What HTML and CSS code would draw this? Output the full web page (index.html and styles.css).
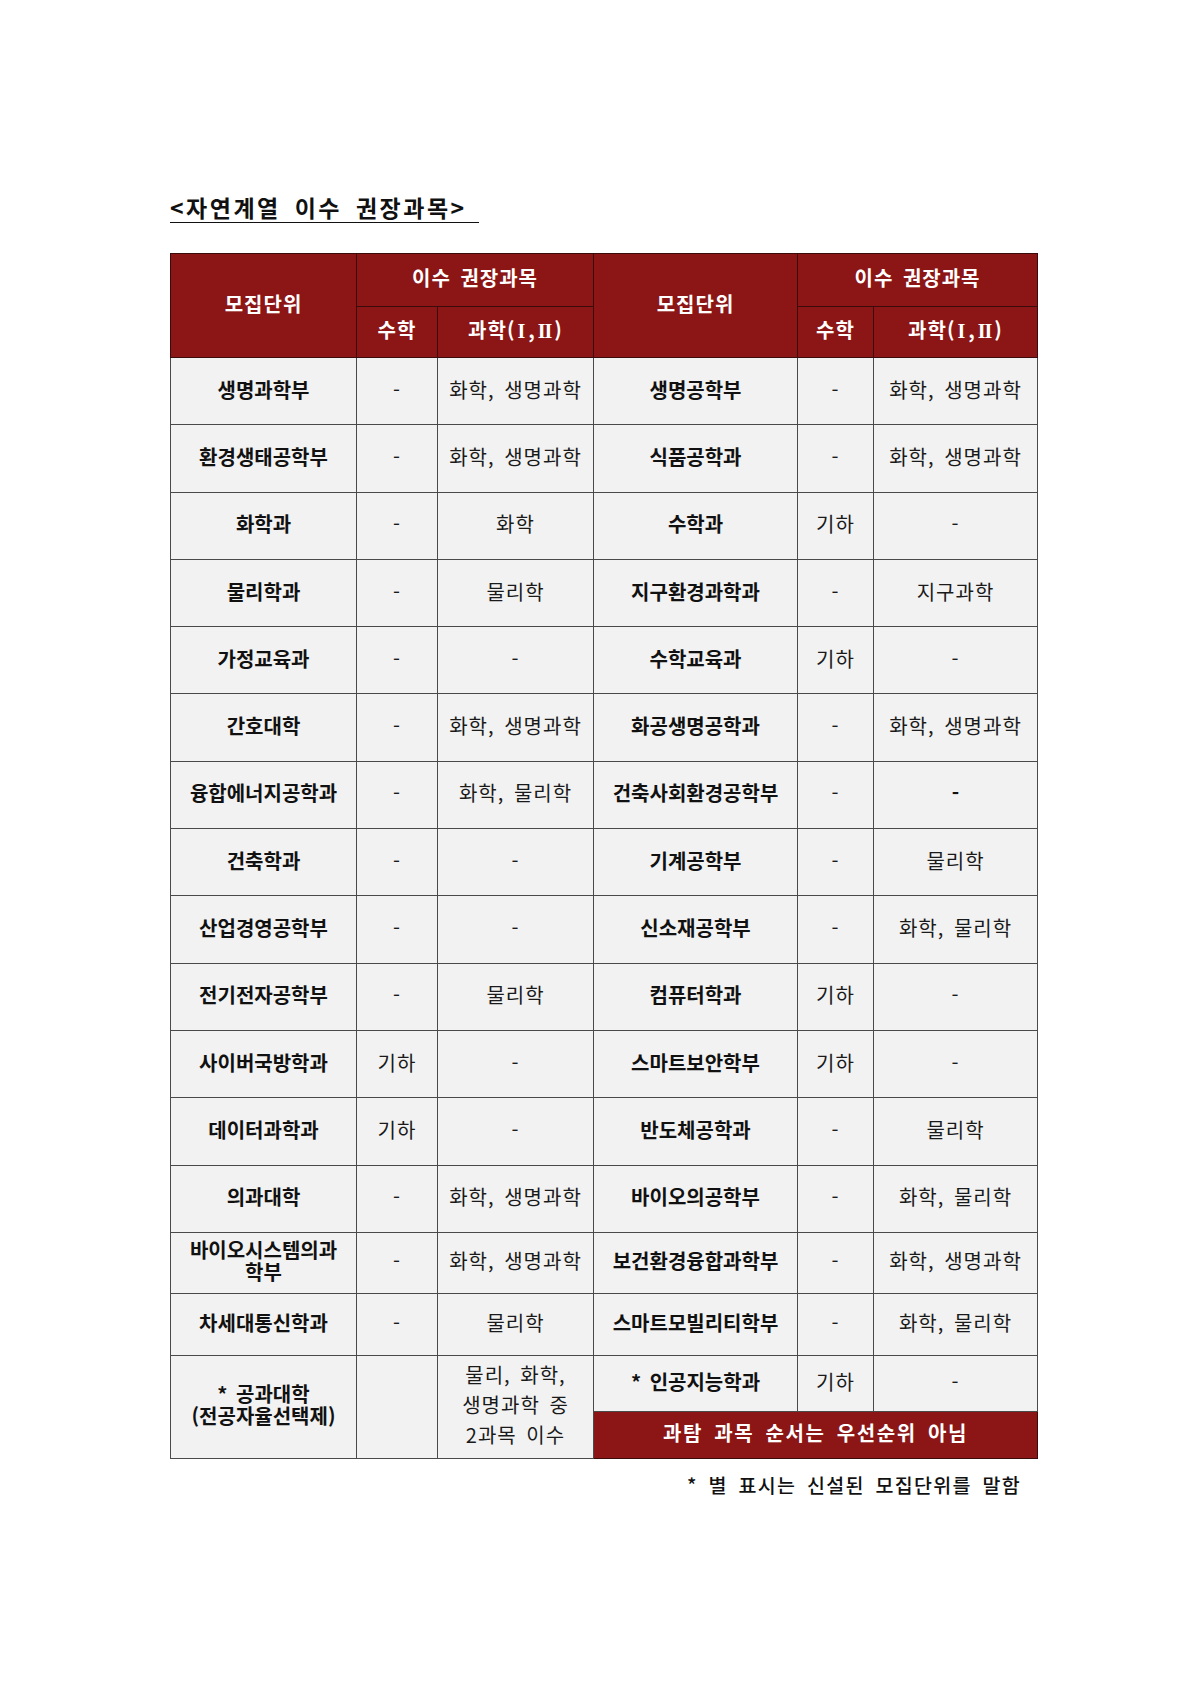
FILE: index.html
```html
<!DOCTYPE html>
<html lang="ko">
<head>
<meta charset="utf-8">
<title>자연계열 이수 권장과목</title>
<link rel="stylesheet" href="styles.css">
</head>
<body>
<div class="page">
  <h1 class="title"><span class="title-text">&lt;자연계열 이수 권장과목&gt;</span></h1>
  <table class="grid">
    <colgroup>
      <col class="c-name"><col class="c-math"><col class="c-sci">
      <col class="c-name2"><col class="c-math2"><col class="c-sci2">
    </colgroup>
    <thead>
      <tr class="h1">
        <th rowspan="2">모집단위</th>
        <th colspan="2">이수 권장과목</th>
        <th rowspan="2">모집단위</th>
        <th colspan="2">이수 권장과목</th>
      </tr>
      <tr class="h2">
        <th>수학</th><th>과학(<span class="rn">I</span>,<span class="rn rn2">II</span>)</th>
        <th>수학</th><th>과학(<span class="rn">I</span>,<span class="rn rn2">II</span>)</th>
      </tr>
    </thead>
    <tbody>
      <tr class="r"><td class="n">생명과학부</td><td>-</td><td>화학, 생명과학</td><td class="n">생명공학부</td><td>-</td><td class="lt">화학, 생명과학</td></tr>
      <tr class="r"><td class="n">환경생태공학부</td><td>-</td><td>화학, 생명과학</td><td class="n">식품공학과</td><td>-</td><td class="lt">화학, 생명과학</td></tr>
      <tr class="r"><td class="n">화학과</td><td>-</td><td>화학</td><td class="n">수학과</td><td>기하</td><td class="lt">-</td></tr>
      <tr class="r"><td class="n">물리학과</td><td>-</td><td>물리학</td><td class="n">지구환경과학과</td><td>-</td><td class="lt">지구과학</td></tr>
      <tr class="r"><td class="n">가정교육과</td><td>-</td><td>-</td><td class="n">수학교육과</td><td>기하</td><td class="lt">-</td></tr>
      <tr class="r"><td class="n">간호대학</td><td>-</td><td>화학, 생명과학</td><td class="n">화공생명공학과</td><td>-</td><td class="lt">화학, 생명과학</td></tr>
      <tr class="r"><td class="n">융합에너지공학과</td><td>-</td><td>화학, 물리학</td><td class="n">건축사회환경공학부</td><td>-</td><td class="lt n">-</td></tr>
      <tr class="r"><td class="n">건축학과</td><td>-</td><td>-</td><td class="n">기계공학부</td><td>-</td><td class="lt">물리학</td></tr>
      <tr class="r"><td class="n">산업경영공학부</td><td>-</td><td>-</td><td class="n">신소재공학부</td><td>-</td><td class="lt">화학, 물리학</td></tr>
      <tr class="r"><td class="n">전기전자공학부</td><td>-</td><td>물리학</td><td class="n">컴퓨터학과</td><td>기하</td><td class="lt">-</td></tr>
      <tr class="r"><td class="n">사이버국방학과</td><td>기하</td><td>-</td><td class="n">스마트보안학부</td><td>기하</td><td class="lt">-</td></tr>
      <tr class="r"><td class="n">데이터과학과</td><td>기하</td><td>-</td><td class="n">반도체공학과</td><td>-</td><td class="lt">물리학</td></tr>
      <tr class="r"><td class="n">의과대학</td><td>-</td><td>화학, 생명과학</td><td class="n">바이오의공학부</td><td>-</td><td class="lt">화학, 물리학</td></tr>
      <tr class="r2"><td class="n tight">바이오시스템의과<br>학부</td><td>-</td><td>화학, 생명과학</td><td class="n">보건환경융합과학부</td><td>-</td><td class="lt">화학, 생명과학</td></tr>
      <tr class="r3"><td class="n">차세대통신학과</td><td>-</td><td>물리학</td><td class="n">스마트모빌리티학부</td><td>-</td><td class="lt">화학, 물리학</td></tr>
      <tr class="r4">
        <td class="n tight" rowspan="2">* 공과대학<br>(전공자율선택제)</td>
        <td rowspan="2"></td>
        <td class="multi" rowspan="2">물리, 화학,<br>생명과학 중<br>2과목 이수</td>
        <td class="n">* 인공지능학과</td><td>기하</td><td class="lt">-</td>
      </tr>
      <tr class="r5">
        <td class="banner" colspan="3">과탐 과목 순서는 우선순위 아님</td>
      </tr>
    </tbody>
  </table>
  <p class="note">* 별 표시는 신설된 모집단위를 말함</p>
</div>
</body>
</html>
```
FILE: styles.css
```css
html, body {
  margin: 0;
  padding: 0;
  background: #ffffff;
}
body {
  font-family: "Noto Sans CJK KR", "Noto Sans", sans-serif;
  color: #111111;
}
.page {
  padding: 193px 0 0 170px;
  width: 867px;
}
.title {
  margin: 0;
  font-size: 23px;
  font-weight: 700;
  line-height: 29px;
  height: 30px;
}
.title-text {
  display: inline-block;
  letter-spacing: 2.5px;
  word-spacing: 5px;
  padding-right: 12px;
  border-bottom: 1.5px solid #111;
  line-height: 29px;
}
.grid {
  margin-top: 30px;
  width: 867px;
  table-layout: fixed;
  border-collapse: collapse;
  font-size: 20px;
  border: 1px solid #444;
}
.c-name { width: 186px; }
.c-math { width: 81px; }
.c-sci { width: 156px; }
.c-name2 { width: 204px; }
.c-math2 { width: 76px; }
.c-sci2 { width: 164px; }
.grid th {
  background: #8c1515;
  color: #ffffff;
  font-weight: 700;
  border: 1px solid #3a0c0c;
  padding: 0 0 5px 0;
  letter-spacing: 1px;
  word-spacing: 3px;
}
.rn {
  font-family: "Liberation Serif", serif;
  font-weight: 700;
  padding: 0 2px;
}
.rn2 {
  letter-spacing: -1px;
  padding-right: 3px;
}
.h1 { height: 53px; }
.h2 { height: 51px; }
.grid td {
  background: #f2f2f2;
  border: 1px solid #4a4a4a;
  text-align: center;
  padding: 0 0 4px 0;
  font-weight: 400;
  letter-spacing: 1px;
  word-spacing: 3px;
  color: #1a1a1a;
}
.grid td.lt {
  border-left: 1px solid #9a9a9a;
}
.grid td.n {
  font-weight: 700;
  color: #111;
  letter-spacing: 0;
}
.grid td.tight {
  line-height: 22px;
}
.grid td.multi {
  line-height: 30px;
  letter-spacing: 1px;
}
.r { height: 67.3px; }
.r2 { height: 61px; }
.r3 { height: 62px; }
.r4 { height: 56px; }
.r5 { height: 47px; }
.grid td.banner {
  background: #8c1515;
  color: #ffffff;
  font-weight: 700;
  letter-spacing: 1.6px;
  word-spacing: 4px;
  border: 1px solid #3a0c0c;
}
.note {
  margin: 13px 0 0 0;
  text-align: right;
  padding-right: 16px;
  font-size: 19.5px;
  font-weight: 500;
  line-height: 26px;
  letter-spacing: 1.3px;
  word-spacing: 4px;
}
```
